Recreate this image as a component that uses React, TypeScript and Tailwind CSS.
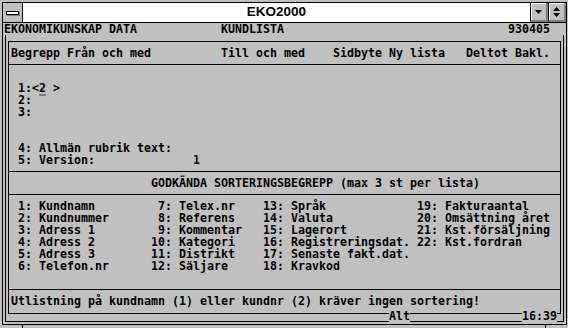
import React from "react";

const MONO =
  "font-['DejaVu_Sans_Mono','Liberation_Mono',monospace] font-bold text-[11.63px] leading-[12px] whitespace-pre text-black";

// bygger en textrad från [kolumn, text]-par
const line = (parts: [number, string][], start = 1) => {
  let s = "";
  for (const [col, text] of parts) {
    const c = col - start;
    if (s.length < c) s += " ".repeat(c - s.length);
    s += text;
  }
  return s;
};

const Row = ({ children }: { children?: React.ReactNode }) => (
  <div className={MONO + " h-[12px]"}>{children}</div>
);

const sortRows: [number, string][][] = [
  [[2, "1: Kundnamn"], [22, "7: Telex.nr"], [37, "13: Språk"], [59, "19: Fakturaantal"]],
  [[2, "2: Kundnummer"], [22, "8: Referens"], [37, "14: Valuta"], [59, "20: Omsättning året"]],
  [[2, "3: Adress 1"], [22, "9: Kommentar"], [37, "15: Lagerort"], [59, "21: Kst.försäljning"]],
  [[2, "4: Adress 2"], [21, "10: Kategori"], [37, "16: Registreringsdat."], [59, "22: Kst.fordran"]],
  [[2, "5: Adress 3"], [21, "11: Distrikt"], [37, "17: Senaste fakt.dat."]],
  [[2, "6: Telefon.nr"], [21, "12: Säljare"], [37, "18: Kravkod"]],
];

const Triangle = ({ up }: { up?: boolean }) => (
  <svg width="7" height="4" viewBox="0 0 7 4" className="block">
    <path d={up ? "M3.5 0 L7 4 L0 4 Z" : "M0 0 L7 0 L3.5 4 Z"} fill="black" />
  </svg>
);

const TitleButton = ({ children }: { children: React.ReactNode }) => (
  <div className="w-[18px] border-l border-black bg-[#c0c0c0] flex flex-col items-center justify-center gap-[2px] border-r-2 border-b-2 border-r-[#808080] border-b-[#808080] shadow-[inset_1px_1px_0_#ffffff]">
    {children}
  </div>
);

export default function App() {
  return (
    <div className="w-[568px] h-[328px] bg-[#c0c0c0] pt-[2px] pl-[2px] pr-[1px] overflow-hidden">
      <div className="h-[323px] border border-black flex flex-col">
        {/* titelrad */}
        <div className="h-[20px] flex border-b border-black shrink-0">
          <div className="w-[20px] border-r border-black flex items-center justify-center">
            <div className="w-[13px] h-[4px] border border-black bg-white shadow-[1px_1px_0_#808080]" />
          </div>
          <div className="flex-1 bg-white flex items-center justify-center font-['Liberation_Sans',Arial,sans-serif] font-bold text-[13.5px] text-black">
            EKO2000
          </div>
          <TitleButton>
            <Triangle />
          </TitleButton>
          <TitleButton>
            <Triangle up />
            <Triangle />
          </TitleButton>
        </div>

        {/* DOS-skärm */}
        <div className="pl-[1px] shrink-0">
          <Row>
            {line(
              [
                [0, "EKONOMIKUNSKAP DATA"],
                [31, "KUNDLISTA"],
                [72, "930405"],
              ],
              0
            )}
          </Row>
        </div>
        <div className="mx-[2px] h-[287px] shrink-0 border-x border-b border-black">
          <div className="relative mt-[6px] ml-[2px] w-[553px] border border-black">
            <div className="h-[23px] pt-[5px] pl-[2px] border-b border-black">
              <Row>
                {line([
                  [1, "Begrepp Från och med"],
                  [31, "Till och med"],
                  [47, "Sidbyte"],
                  [55, "Ny lista"],
                  [66, "Deltot"],
                  [73, "Bakl."],
                ])}
              </Row>
            </div>
            <div className="h-[107px] pt-[5px] pl-[2px] border-b border-black">
              <Row />
              <Row>
                {" 1:<"}
                <span className="underline decoration-[#808080] decoration-2 underline-offset-[2px]">2</span>
                {" >"}
              </Row>
              <Row>{line([[2, "2:"]])}</Row>
              <Row>{line([[2, "3:"]])}</Row>
              <Row />
              <Row />
              <Row>{line([[2, "4: Allmän rubrik text:"]])}</Row>
              <Row>{line([[2, "5: Version:"], [27, "1"]])}</Row>
            </div>
            <div className="h-[23px] pt-[5px] pl-[2px] border-b border-black">
              <Row>{line([[21, "GODKÄNDA SORTERINGSBEGREPP (max 3 st per lista)"]])}</Row>
            </div>
            <div className="h-[95px] pt-[5px] pl-[2px] border-b border-black">
              {sortRows.map((r, i) => (
                <Row key={i}>{line(r)}</Row>
              ))}
            </div>
            <div className="h-[23px] pt-[5px] pl-[2px]">
              <Row>
                {line([[1, "Utlistning på kundnamn (1) eller kundnr (2) kräver ingen sortering!"]])}
              </Row>
            </div>
            {/* text i nedre ramen */}
            <div className={MONO + " absolute top-[268px] left-[380px] h-[12px] bg-[#c0c0c0]"}>Alt</div>
            <div className={MONO + " absolute top-[268px] left-[513px] h-[12px] bg-[#c0c0c0]"}>16:39</div>
          </div>
        </div>
      </div>
      {/* hörnmarkeringar i ramen */}
      <div className="flex h-[3px]">
        <div className="ml-[20px] w-px bg-black" />
        <div className="ml-[522px] w-px bg-black" />
      </div>
    </div>
  );
}
